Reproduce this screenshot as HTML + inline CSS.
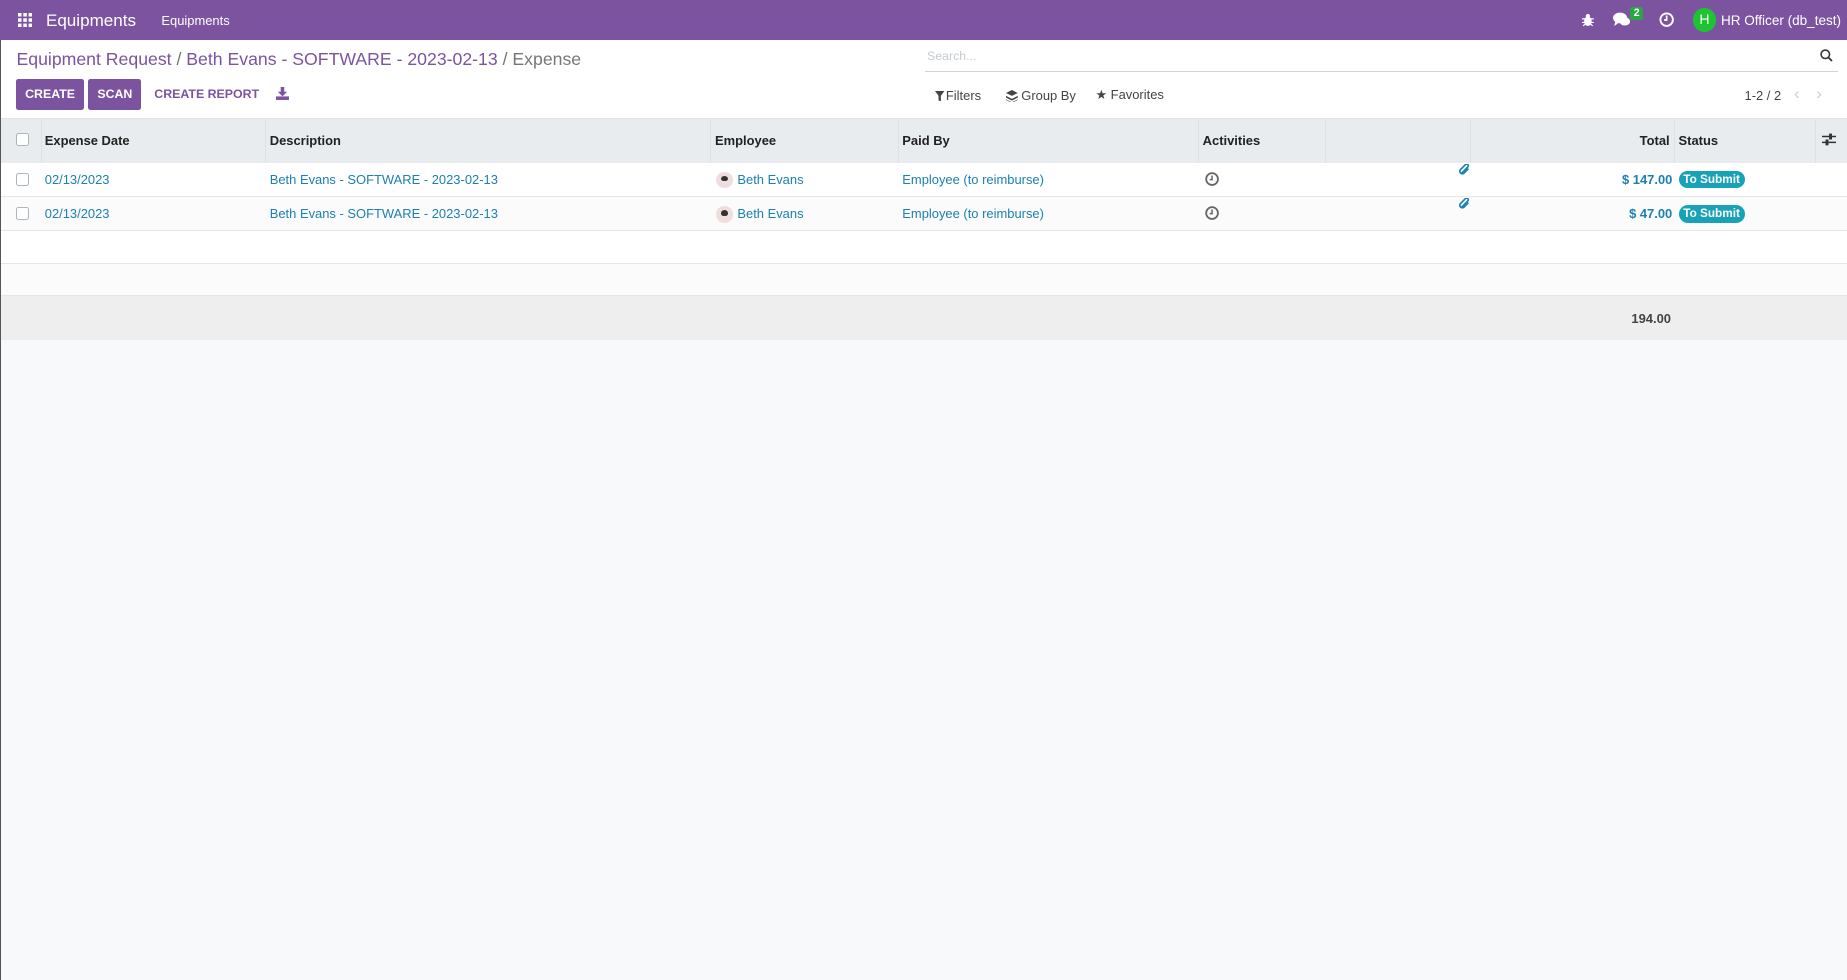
<!DOCTYPE html>
<html><head><meta charset="utf-8"><style>
html{zoom:1.17793}
*{box-sizing:border-box;margin:0;padding:0}
body{width:1568px;height:832px;overflow:hidden;background:#f8f9fa;font-family:"Liberation Sans",sans-serif;font-size:12px;color:#212529;position:relative}
.a{position:absolute;white-space:nowrap}
.nav{position:absolute;left:0;top:0;width:1568px;height:34px;background:#7c539f}
.top{position:absolute;left:0;top:34px;width:1568px;height:66px;background:#fff}
.lnk{color:#1b80b3}
.btn{position:absolute;top:67px;height:26px;background:#7c539f;color:#fff;font-weight:bold;font-size:10.5px;line-height:26px;text-align:center;border-radius:2px}
.th{position:absolute;top:100px;height:38px;left:0;width:1568px;background:#e9ecef;border-top:1px solid #dee2e6}
.hd{position:absolute;top:113px;font-weight:bold;font-size:11px;color:#222}
.vl{position:absolute;top:101px;height:37px;width:1px;background:#dde0e4}
.row{position:absolute;left:0;width:1568px;border-bottom:1px solid #e4e6e9}
.cb{position:absolute;width:11px;height:11px;border:1px solid #adb5bd;border-radius:2px;background:#fff}
.badge{position:absolute;background:#17a2b8;color:#fff;font-weight:bold;font-size:10px;border-radius:8px;padding:1px 4px;line-height:13px}
.av{position:absolute;width:14px;height:14px;border-radius:50%;background:#f0dede}
.av:after{content:"";position:absolute;left:4px;top:3px;width:6px;height:5px;border-radius:50% 50% 40% 40%;background:#333}
.t{font-size:11px}
</style></head><body>
<div class="nav"></div>
<svg class="a" style="left:15px;top:11px" width="12" height="12" viewBox="0 0 12 12" fill="#fff"><rect x="0" y="0" width="3" height="3"/><rect x="4.5" y="0" width="3" height="3"/><rect x="9" y="0" width="3" height="3"/><rect x="0" y="4.5" width="3" height="3"/><rect x="4.5" y="4.5" width="3" height="3"/><rect x="9" y="4.5" width="3" height="3"/><rect x="0" y="9" width="3" height="3"/><rect x="4.5" y="9" width="3" height="3"/><rect x="9" y="9" width="3" height="3"/></svg>
<div class="a" style="left:39px;top:9px;font-size:14.5px;color:#fff">Equipments</div>
<div class="a" style="left:137px;top:11px;font-size:11px;color:#fff">Equipments</div>
<svg class="a" style="left:1343px;top:11px" width="10" height="12" viewBox="0 0 10 12" fill="#fff"><ellipse cx="5" cy="7" rx="3.2" ry="4"/><circle cx="5" cy="2.5" r="1.8"/><path d="M0 5h10M0 8h10M1 11l2-2M9 11l-2-2" stroke="#fff" stroke-width="1"/></svg>
<svg class="a" style="left:1369px;top:10px" width="15" height="13" viewBox="0 0 15 13" fill="#fff"><ellipse cx="6" cy="5" rx="6" ry="4.5"/><path d="M2 8l-1 4 4-3z"/><ellipse cx="10" cy="8" rx="4.5" ry="3.5"/></svg>
<div class="a" style="left:1384px;top:6px;background:#28a745;color:#fff;font-size:9px;font-weight:bold;padding:0 3px;border-radius:2px;line-height:11px">2</div>
<svg class="a" style="left:1408px;top:10px" width="13" height="13" viewBox="0 0 13 13"><circle cx="6.5" cy="6.5" r="5.3" fill="none" stroke="#fff" stroke-width="1.6"/><path d="M6.5 3v3.8H4.3" fill="none" stroke="#fff" stroke-width="1.4"/></svg>
<div class="a" style="left:1437px;top:7px;width:20px;height:20px;border-radius:50%;background:#1cc430;color:#fff;text-align:center;line-height:20px;font-size:12px">H</div>
<div class="a" style="left:1461px;top:11px;color:#fff;font-size:11.5px">HR Officer (db_test)</div>

<div class="top"></div>
<div class="a" style="left:14px;top:42px;font-size:15px;color:#7c539f">Equipment Request <span style="color:#777">/</span> Beth Evans - SOFTWARE - 2023-02-13 <span style="color:#777">/ Expense</span></div>
<div class="btn" style="left:14px;width:57px">CREATE</div>
<div class="btn" style="left:75px;width:45px">SCAN</div>
<div class="a" style="left:131px;top:74px;font-size:10.5px;font-weight:bold;color:#7c539f">CREATE REPORT</div>
<svg class="a" style="left:234px;top:74px" width="11" height="11" viewBox="0 0 11 11" fill="#7c539f"><path d="M4 0h3v4h2.5L5.5 8 1.5 4H4z"/><rect x="0" y="8" width="11" height="3"/></svg>
<div class="a" style="left:787px;top:42px;font-size:10.5px;color:#c6ccd2">Search...</div>
<div class="a" style="left:785px;top:60px;width:775px;height:1px;background:#d0d4d8"></div>
<svg class="a" style="left:1545px;top:42px" width="11" height="11" viewBox="0 0 11 11"><circle cx="4.5" cy="4.5" r="3.6" fill="none" stroke="#333" stroke-width="1.3"/><path d="M7.2 7.2l3 3" stroke="#333" stroke-width="1.5"/></svg>
<svg class="a" style="left:794px;top:77px" width="8" height="9" viewBox="0 0 8 9" fill="#444"><path d="M0 0h8L5 4v5L3 8V4z"/></svg>
<div class="a" style="left:803px;top:75px;font-size:11px;color:#444">Filters</div>
<svg class="a" style="left:854px;top:76px" width="10" height="11" viewBox="0 0 10 11" fill="#444"><path d="M5 0l5 2.5L5 5 0 2.5z"/><path d="M0 5l5 2.5L10 5v1.5L5 9 0 6.5z"/><path d="M0 8l5 2.5L10 8v.5L5 11 0 8.5z"/></svg>
<div class="a" style="left:867px;top:75px;font-size:11px;color:#444">Group By</div>
<div class="a" style="left:930px;top:74px;font-size:11px;color:#444">★ Favorites</div>
<div class="a" style="left:1481px;top:75px;font-size:11px;color:#444">1-2 / 2</div>
<div class="a" style="left:1523px;top:72px;font-size:14px;color:#ccc">‹</div>
<div class="a" style="left:1542px;top:72px;font-size:14px;color:#ccc">›</div>

<div class="th"></div>
<div class="vl" style="left:35px"></div><div class="vl" style="left:225px"></div><div class="vl" style="left:603px"></div><div class="vl" style="left:762px"></div><div class="vl" style="left:1017px"></div><div class="vl" style="left:1125px"></div><div class="vl" style="left:1248px"></div><div class="vl" style="left:1421px"></div><div class="vl" style="left:1541px"></div>
<div class="cb" style="left:14px;top:113px"></div>
<div class="hd" style="left:38px">Expense Date</div>
<div class="hd" style="left:229px">Description</div>
<div class="hd" style="left:607px">Employee</div>
<div class="hd" style="left:766px">Paid By</div>
<div class="hd" style="left:1021px">Activities</div>
<div class="hd" style="left:1392px">Total</div>
<div class="hd" style="left:1425px">Status</div>
<svg class="a" style="left:1547px;top:113px" width="12" height="11" viewBox="0 0 12 11"><path d="M0 3h12M0 8h12" stroke="#333" stroke-width="1.3"/><rect x="6" y="0.5" width="2.5" height="5" fill="#333"/><rect x="3" y="5.5" width="2.5" height="5" fill="#333"/></svg>

<div class="row" style="top:138px;height:29px;background:#fff"></div>
<div class="row" style="top:167px;height:29px;background:#fbfbfb"></div>
<div class="row" style="top:196px;height:28px;background:#fff"></div>
<div class="row" style="top:224px;height:27px;background:#fbfbfb"></div>
<div class="a" style="left:0;top:251px;width:1568px;height:38px;background:#eeeeee"></div>
<div class="a" style="left:1385px;top:264px;font-weight:bold;font-size:11px;color:#444">194.00</div>

<div class="cb" style="left:14px;top:147px"></div>
<div class="a lnk t" style="left:38px;top:146px">02/13/2023</div>
<div class="a lnk t" style="left:229px;top:146px">Beth Evans - SOFTWARE - 2023-02-13</div>
<div class="av" style="left:608px;top:146px"></div>
<div class="a lnk t" style="left:626px;top:146px">Beth Evans</div>
<div class="a lnk t" style="left:766px;top:146px">Employee (to reimburse)</div>
<svg class="a" style="left:1023px;top:146px" width="12" height="12" viewBox="0 0 12 12"><circle cx="6" cy="6" r="5" fill="none" stroke="#666" stroke-width="1.5"/><path d="M6 3v3.5H4" fill="none" stroke="#666" stroke-width="1.3"/></svg>
<svg class="a" style="left:1239px;top:139px" width="10" height="10" viewBox="0 0 10 10"><path d="M2 8L7.5 2.5a1.3 1.3 0 0 0-2-2L1 5a2.2 2.2 0 0 0 3 3l4-4" fill="none" stroke="#1b80b3" stroke-width="1.4"/></svg>
<div class="a lnk t" style="left:1377px;top:146px;font-weight:bold">$ 147.00</div>
<div class="badge" style="left:1425px;top:145px">To Submit</div>

<div class="cb" style="left:14px;top:176px"></div>
<div class="a lnk t" style="left:38px;top:175px">02/13/2023</div>
<div class="a lnk t" style="left:229px;top:175px">Beth Evans - SOFTWARE - 2023-02-13</div>
<div class="av" style="left:608px;top:175px"></div>
<div class="a lnk t" style="left:626px;top:175px">Beth Evans</div>
<div class="a lnk t" style="left:766px;top:175px">Employee (to reimburse)</div>
<svg class="a" style="left:1023px;top:175px" width="12" height="12" viewBox="0 0 12 12"><circle cx="6" cy="6" r="5" fill="none" stroke="#666" stroke-width="1.5"/><path d="M6 3v3.5H4" fill="none" stroke="#666" stroke-width="1.3"/></svg>
<svg class="a" style="left:1239px;top:168px" width="10" height="10" viewBox="0 0 10 10"><path d="M2 8L7.5 2.5a1.3 1.3 0 0 0-2-2L1 5a2.2 2.2 0 0 0 3 3l4-4" fill="none" stroke="#1b80b3" stroke-width="1.4"/></svg>
<div class="a lnk t" style="left:1383px;top:175px;font-weight:bold">$ 47.00</div>
<div class="badge" style="left:1425px;top:174px">To Submit</div>
<div class="a" style="left:0;top:34px;width:1px;height:798px;background:#555"></div>
</body></html>
